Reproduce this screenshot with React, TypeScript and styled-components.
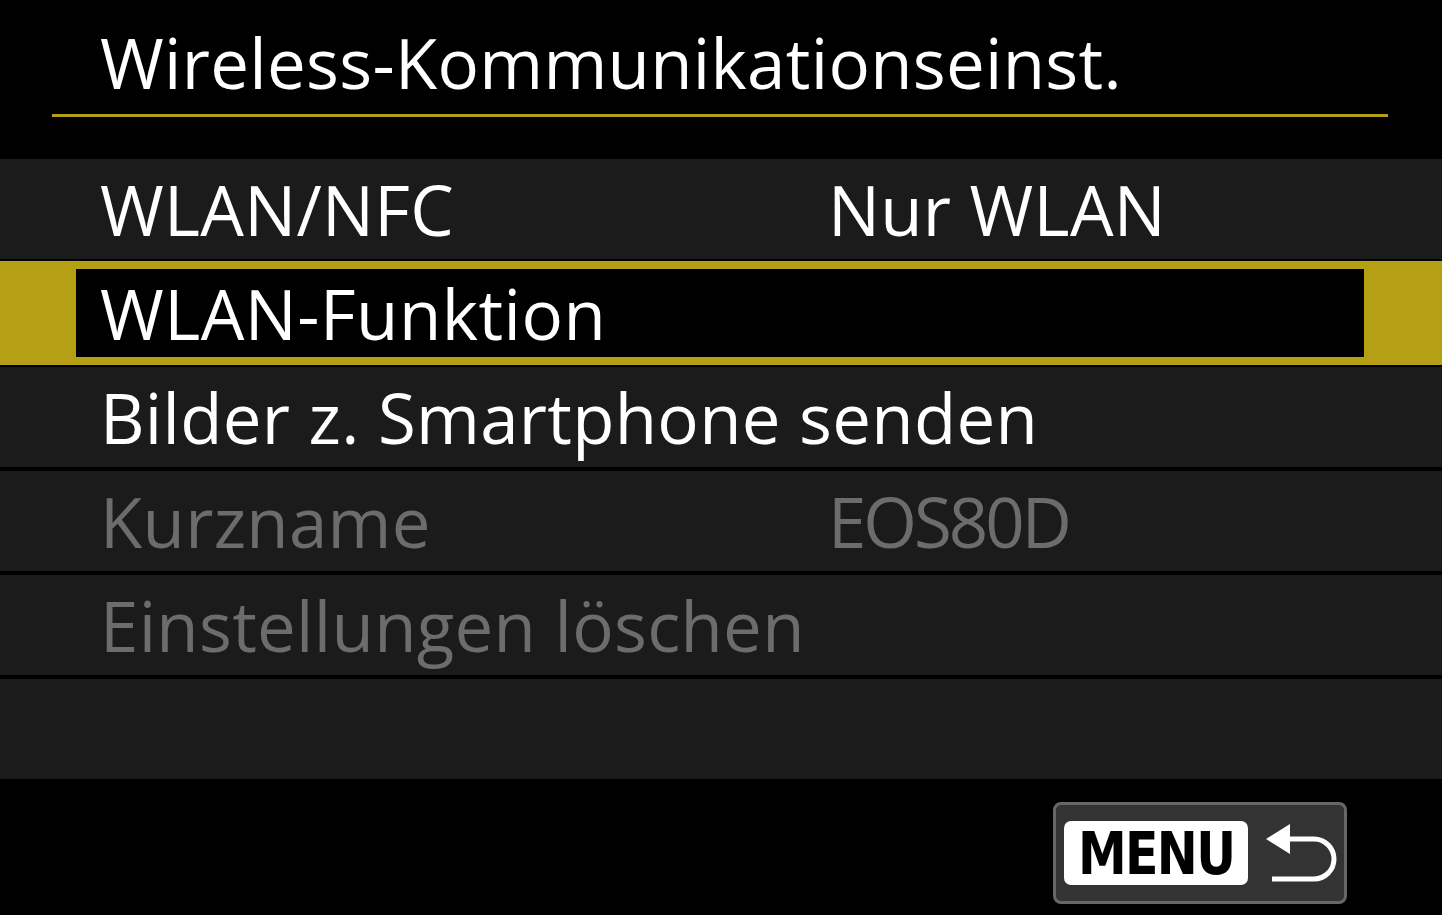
import React from 'react';
import styled, { createGlobalStyle } from 'styled-components';

const GlobalStyle = createGlobalStyle`
  html, body {
    margin: 0;
    padding: 0;
    background: #000;
  }
`

const Screen = styled.div`
  width: 1442px;
  height: 915px;
  background: #000;
  display: flex;
  flex-direction: column;
  font-family: "Open Sans", "Noto Sans", sans-serif;
  color: #fff;
  overflow: hidden;
`

const Header = styled.div`
  margin: 0 54px 0 52px;
  height: 114px;
  border-bottom: 3px solid #b59f14;
  display: flex;
  align-items: flex-end;
  padding-left: 48px;
  box-sizing: content-box;
`

const Title = styled.h1`
  margin: 0 0 17px;
  font-size: 69px;
  font-weight: 400;
  line-height: 1;
  letter-spacing: 0.3px;
`

const MenuList = styled.div`
  margin-top: 42px;
  display: flex;
  flex-direction: column;
  gap: 4px;
`

const Row = styled.div<{ $dim?: boolean }>`
  height: 100px;
  background: #1b1b1b;
  display: grid;
  grid-template-columns: 728px 1fr;
  align-items: center;
  padding-left: 100px;
  font-size: 69px;
  line-height: 1;
  letter-spacing: 0.3px;
  color: ${p => (p.$dim ? '#6c6c6c' : '#fff')};
`

const SelectedRow = styled.div`
  height: 104px;
  margin: -2px 0;
  background: #b59f14;
  padding: 8px 78px 8px 76px;
  box-sizing: border-box;
  display: flex;
`

const SelectedInner = styled.div`
  flex: 1;
  background: #000;
  display: grid;
  grid-template-columns: 728px 1fr;
  align-items: center;
  padding-left: 24px;
  font-size: 69px;
  line-height: 1;
  letter-spacing: 0.5px;
`

const Label = styled.span`
  white-space: nowrap;
`

const Value = styled.span<{ $narrow?: boolean }>`
  white-space: nowrap;
  letter-spacing: ${p => (p.$narrow ? '-3px' : '0.3px')};
`

const Footer = styled.div`
  display: flex;
  justify-content: flex-end;
  padding: 23px 95px 0 0;
`

const MenuButton = styled.div`
  width: 294px;
  height: 102px;
  box-sizing: border-box;
  background: #333;
  border: 3px solid #676767;
  border-radius: 8px;
  display: flex;
  align-items: center;
  padding-left: 8px;
  gap: 18px;
`

const MenuTag = styled.div`
  width: 184px;
  height: 64px;
  background: #fff;
  border-radius: 7px;
  display: flex;
  align-items: center;
  justify-content: center;
  color: #000;
  font-family: "DejaVu Sans", sans-serif;
  font-weight: 700;
  font-size: 59px;
  letter-spacing: -2px;
  span {
    display: inline-block;
    transform: scaleX(0.83);
  }
`

const ReturnIcon = () => (
  <svg width="72" height="62" viewBox="0 0 72 62">
    <polygon points="0,17 24,2 24,32" fill="#fff" />
    <path d="M20 17 H48 A20 20 0 0 1 48 57 H6" fill="none" stroke="#fff" strokeWidth="5" />
  </svg>
)

type Item = { label: string; value?: string; dim?: boolean }

const items: Item[] = [
  { label: 'WLAN/NFC', value: 'Nur WLAN' },
  { label: 'WLAN-Funktion' },
  { label: 'Bilder z. Smartphone senden' },
  { label: 'Kurzname', value: 'EOS80D', dim: true },
  { label: 'Einstellungen löschen', dim: true },
  { label: '' },
]

const selected = 1

export default function App() {
  return (
    <Screen>
      <GlobalStyle />
      <Header>
        <Title>Wireless-Kommunikationseinst.</Title>
      </Header>
      <MenuList>
        {items.map((item, i) =>
          i === selected ? (
            <SelectedRow key={i}>
              <SelectedInner>
                <Label>{item.label}</Label>
                <Value>{item.value}</Value>
              </SelectedInner>
            </SelectedRow>
          ) : (
            <Row key={i} $dim={item.dim}>
              <Label>{item.label}</Label>
              <Value $narrow={item.value === 'EOS80D'}>{item.value}</Value>
            </Row>
          )
        )}
      </MenuList>
      <Footer>
        <MenuButton>
          <MenuTag><span>MENU</span></MenuTag>
          <ReturnIcon />
        </MenuButton>
      </Footer>
    </Screen>
  )
}
